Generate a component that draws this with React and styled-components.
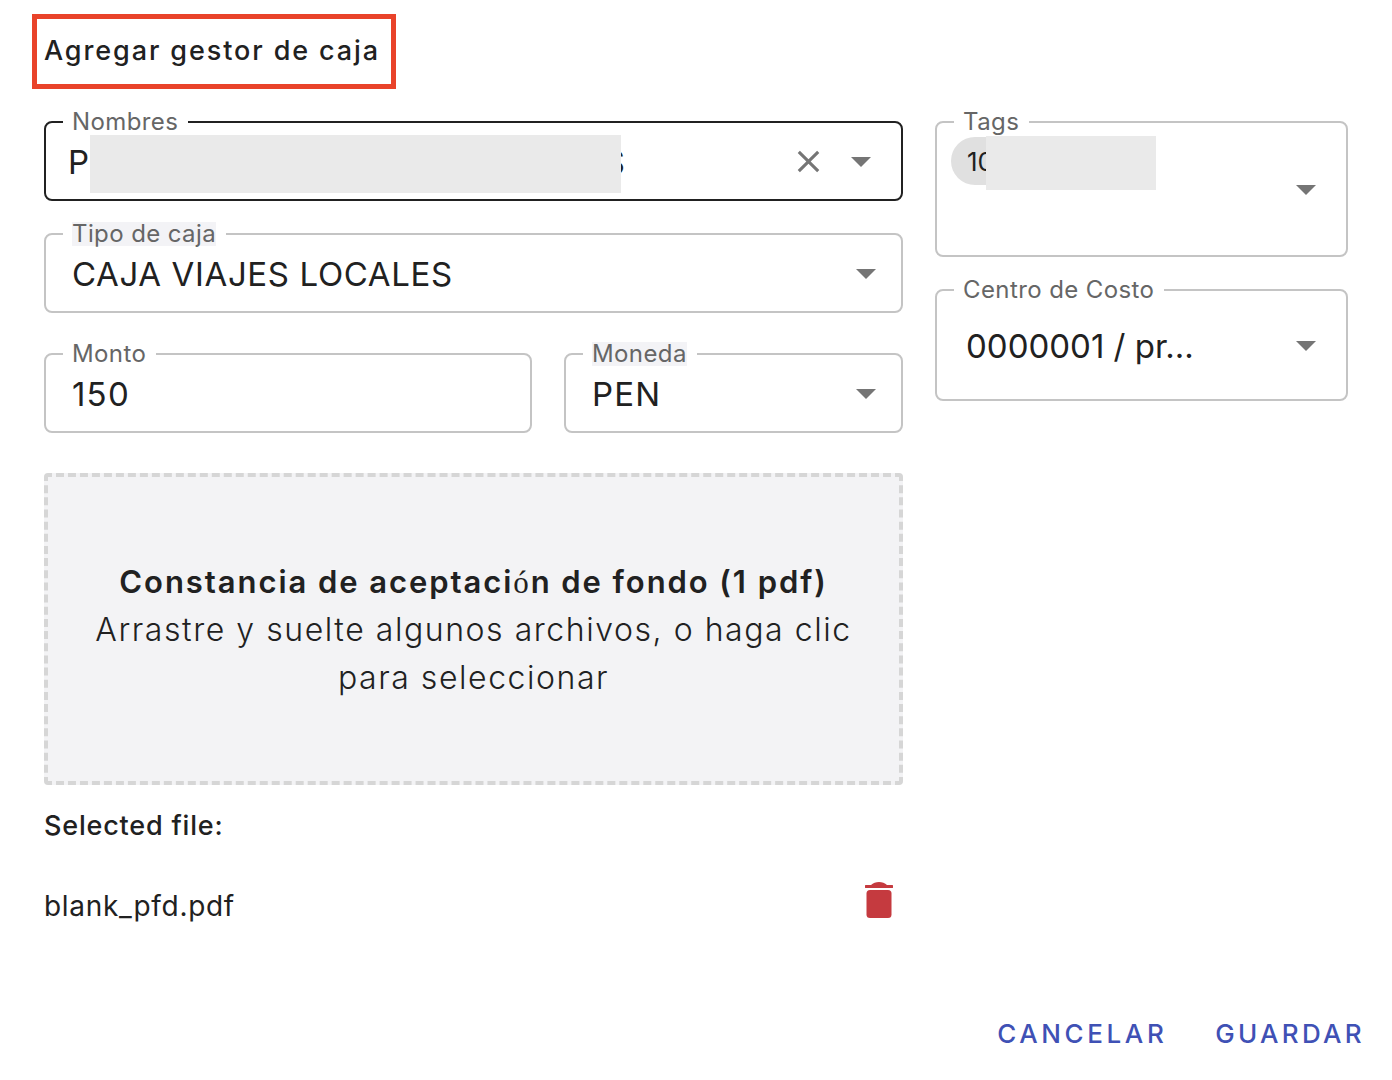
import React from "react";
import styled, { createGlobalStyle } from "styled-components";

const GlobalStyle = createGlobalStyle`
  html, body {
    margin: 0;
    background: #fff;
    font-family: "Inter", "Liberation Sans", sans-serif;
    color: #212121;
  }
  * { box-sizing: border-box; }
`;

const Page = styled.div`
  width: 1392px;
  height: 1080px;
  padding: 14px 27px 0 44px;
  overflow: hidden;
`;

const Title = styled.h2`
  width: 364px;
  height: 75px;
  margin: 0 0 32px -12px;
  padding: 0 0 2px 7px;
  display: flex;
  align-items: center;
  border: 5px solid #e9432a;
  font-size: 27px;
  font-weight: 500;
  letter-spacing: 1.9px;
`;

const Columns = styled.div`
  display: flex;
  gap: 32px;
  align-items: flex-start;
`;

const LeftColumn = styled.div`
  width: 859px;
  display: flex;
  flex-direction: column;
`;

const RightColumn = styled.div`
  width: 413px;
  display: flex;
  flex-direction: column;
  gap: 32px;
`;

const Row = styled.div`
  display: flex;
  gap: 32px;
  margin-top: 40px;
`;

const FieldBox = styled.div`
  position: relative;
  flex: ${(p) => p.$flex || "none"};
  height: ${(p) => p.$height || 80}px;
  margin-top: ${(p) => p.$top || 0}px;
  padding: ${(p) => p.$padding || "0 26px"};
  display: flex;
  align-items: ${(p) => p.$align || "center"};
  border: 2px solid ${(p) => (p.$active ? "#212121" : "#c4c4c4")};
  border-radius: 8px;
`;

const Label = styled.label`
  position: absolute;
  top: -13px;
  left: 17px;
  padding: 0 10px 0 9px;
  background: #fff;
  font-size: 24px;
  line-height: 24px;
  letter-spacing: 0.4px;
  color: #666;
`;

const LabelText = styled.span`
  display: block;
  background: ${(p) => (p.$filled ? "#f3f3f6" : "transparent")};
`;

const Value = styled.span`
  padding-top: 2px;
  font-size: 33px;
  letter-spacing: ${(p) => p.$spacing ?? 0.63}px;
  white-space: nowrap;
`;

const Redaction = styled.span`
  display: block;
  position: relative;
  flex: none;
  width: ${(p) => p.$width}px;
  height: ${(p) => p.$height}px;
  margin: ${(p) => p.$top || 0}px 0 0 ${(p) => p.$left || 0}px;
  background: #eaeaea;
`;

const CutLetter = styled(Value)`
  margin-left: -17px;
`;

const Adornments = styled.div`
  position: absolute;
  top: 0;
  bottom: 0;
  right: ${(p) => p.$right}px;
  display: flex;
  align-items: center;
  gap: 24px;
`;

const CaretIcon = styled.svg`
  margin-top: 2px;
`;

const Chip = styled.div`
  flex: none;
  width: 80px;
  height: 48px;
  margin: 14px 0 0 -12px;
  padding-left: 16px;
  display: flex;
  align-items: center;
  border-radius: 24px;
  background: #e0e0e0;
  font-size: 26px;
`;

const Dropzone = styled.div`
  height: 312px;
  margin-top: 40px;
  padding: 2px 36px 0;
  display: flex;
  flex-direction: column;
  justify-content: center;
  text-align: center;
  background: #f3f3f5;
  border: 4px dashed #d6d6d6;
  border-radius: 4px;
`;

const DropTitle = styled.div`
  font-size: 31px;
  line-height: 48px;
  font-weight: 600;
  letter-spacing: 1.93px;
`;

const FallbackGlyph = styled.span`
  font-family: "Liberation Serif", serif;
  font-weight: 400;
`;

const DropHint = styled.div`
  margin-top: -1px;
  font-size: 32px;
  line-height: 48px;
  font-weight: 300;
  letter-spacing: 1.55px;
`;

const Heading = styled.div`
  margin-top: 23px;
  font-size: 27px;
  line-height: 36px;
  font-weight: 500;
  letter-spacing: 0.8px;
`;

const FileRow = styled.div`
  margin-top: 44px;
  padding-right: 10px;
  display: flex;
  justify-content: space-between;
  align-items: center;
  height: 36px;
  font-size: 28px;
  letter-spacing: 0.7px;
`;

const TrashIcon = styled.svg`
  margin-bottom: 12px;
`;

const Actions = styled.div`
  display: flex;
  justify-content: flex-end;
  gap: 48px;
  margin-top: 92px;
`;

const ActionButton = styled.button`
  padding: 0;
  border: 0;
  background: none;
  font-family: inherit;
  font-size: 26px;
  font-weight: 500;
  line-height: 36px;
  letter-spacing: ${(p) => p.$spacing}px;
  color: #3f51b5;
`;

const Caret = () => (
  <CaretIcon width="20" height="10" viewBox="0 0 20 10">
    <path d="M0 0h20L10 10z" fill="#757575" />
  </CaretIcon>
);

const Close = () => (
  <svg width="37" height="37" viewBox="0 0 24 24">
    <path
      d="M19 6.41 17.59 5 12 10.59 6.41 5 5 6.41 10.59 12 5 17.59 6.41 19 12 13.41 17.59 19 19 17.59 13.41 12z"
      fill="#757575"
    />
  </svg>
);

const Trash = () => (
  <TrashIcon width="28" height="36" viewBox="0 0 28 36">
    <path
      d="M1 3h5C8 1 11 0 14 0s6 1 8 3h5a1.500 1.500 0 0 1 0 3H1a1.500 1.500 0 0 1 0-3z"
      fill="#c53a3f"
    />
    <rect x="1.500" y="8" width="25" height="28" rx="3.500" fill="#c53a3f" />
  </TrashIcon>
);

const Field = ({ label, filled, children, ...rest }) => (
  <FieldBox {...rest}>
    <Label>
      <LabelText $filled={filled}>{label}</LabelText>
    </Label>
    {children}
  </FieldBox>
);

const SelectField = ({ label, value, filled, caretRight = 25, spacing, ...rest }) => (
  <Field label={label} filled={filled} {...rest}>
    <Value $spacing={spacing}>{value}</Value>
    <Adornments $right={caretRight}>
      <Caret />
    </Adornments>
  </Field>
);

const App = () => (
  <Page>
    <GlobalStyle />
    <Title>Agregar gestor de caja</Title>
    <Columns>
      <LeftColumn>
        <Field label="Nombres" $active $padding="0 22px">
          <Value>P</Value>
          <Redaction $width={531} $height={58} $top={5} />
          <CutLetter>S</CutLetter>
          <Adornments $right={30}>
            <Close />
            <Caret />
          </Adornments>
        </Field>
        <SelectField label="Tipo de caja" value="CAJA VIAJES LOCALES" filled $top={32} />
        <Row>
          <Field label="Monto" $flex="0 0 488px">
            <Value $spacing={1.2}>150</Value>
          </Field>
          <SelectField label="Moneda" value="PEN" filled spacing={1.2} $flex="1" />
        </Row>
        <Dropzone>
          <DropTitle>
            Constancia de aceptaci<FallbackGlyph>ó</FallbackGlyph>n de fondo (1 pdf)
          </DropTitle>
          <DropHint>Arrastre y suelte algunos archivos, o haga clic para seleccionar</DropHint>
        </Dropzone>
        <Heading>Selected file:</Heading>
        <FileRow>
          <span>blank_pfd.pdf</span>
          <Trash />
        </FileRow>
      </LeftColumn>
      <RightColumn>
        <Field label="Tags" $height={136} $align="flex-start">
          <Chip>10</Chip>
          <Redaction $width={170} $height={54} $left={-45} $top={13} />
          <Adornments $right={30}>
            <Caret />
          </Adornments>
        </Field>
        <SelectField
          label="Centro de Costo"
          value="0000001 / pr…"
          spacing={0}
          caretRight={30}
          $height={112}
          $padding="0 29px"
        />
      </RightColumn>
    </Columns>
    <Actions>
      <ActionButton $spacing={3.6}>CANCELAR</ActionButton>
      <ActionButton $spacing={3.3}>GUARDAR</ActionButton>
    </Actions>
  </Page>
);

export default App;
